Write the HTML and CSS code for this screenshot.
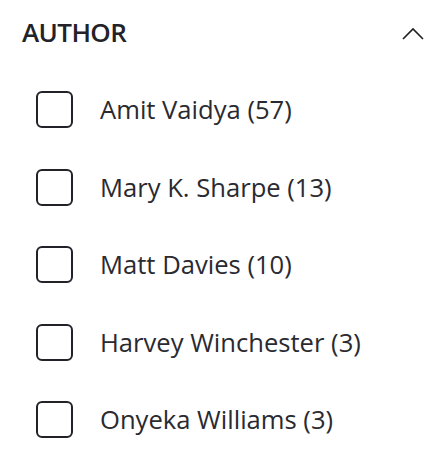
FILE: index.html
```html
<!DOCTYPE html>
<html>
<head>
<meta charset="utf-8">
<link rel="stylesheet" href="styles.css">
</head>
<body>
<section class="facet">
  <div class="facet-header">
    <h2 class="facet-title">AUTHOR</h2>
    <svg class="chevron" width="22" height="13" viewBox="0 0 22 13"><path d="M1 12 L11 2 L21 12" fill="none" stroke="#1f2024" stroke-width="1.6"/></svg>
  </div>
  <ul class="facet-list">
    <li class="facet-item"><span class="box"></span><span class="label">Amit Vaidya (57)</span></li>
    <li class="facet-item"><span class="box"></span><span class="label">Mary K. Sharpe (13)</span></li>
    <li class="facet-item"><span class="box"></span><span class="label">Matt Davies (10)</span></li>
    <li class="facet-item"><span class="box"></span><span class="label">Harvey Winchester (3)</span></li>
    <li class="facet-item"><span class="box"></span><span class="label">Onyeka Williams (3)</span></li>
  </ul>
</section>
</body>
</html>
```
FILE: styles.css
```css
html, body {
  margin: 0;
  padding: 0;
  background: #ffffff;
}
body {
  font-family: "Open Sans", "Noto Sans", sans-serif;
  color: #222228;
}
.facet {
  padding: 0 20px 0 22px;
}
.facet-header {
  display: flex;
  align-items: center;
  justify-content: space-between;
  height: 64px;
}
.facet-title {
  margin: 0;
  font-size: 26px;
  font-weight: 600;
  letter-spacing: -0.6px;
  color: #222228;
}
.chevron {
  display: block;
  margin-top: 3px;
}
.facet-list {
  list-style: none;
  margin: 0;
  padding: 7px 0 0 14px;
}
.facet-item {
  display: flex;
  align-items: center;
  gap: 27px;
  height: 77.5px;
}
.box {
  width: 37px;
  height: 37px;
  box-sizing: border-box;
  border: 2px solid #222228;
  border-radius: 6px;
  flex: none;
}
.label {
  font-size: 25.6px;
  color: #2a2a30;
}
```
